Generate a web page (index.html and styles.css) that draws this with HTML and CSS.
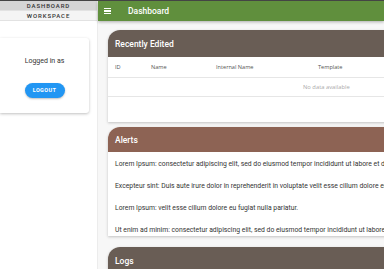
FILE: index.html
```html
<!DOCTYPE html>
<html lang="en">
<head>
    <meta charset="UTF-8">
    <title>Dashboard</title>
    <link rel="stylesheet" href="styles.css">
</head>
<body>
<div class="app">
    <!-- 왼쪽 사이드바 -->
    <aside class="side">
        <div class="tab on">DASHBOARD</div>
        <div class="tab">WORKSPACE</div>
        <div class="user-card">
            <p>Logged in as</p>
            <button class="btn-logout">LOGOUT</button>
        </div>
    </aside>

    <!-- 메인 영역 -->
    <main class="main">
        <header class="topbar">
            <span class="burger"><i></i><i></i><i></i></span>
            <h1>Dashboard</h1>
        </header>

        <div class="content">
            <section class="card">
                <h2 class="card-hd gray">Recently Edited</h2>
                <table class="tbl">
                    <thead>
                        <tr>
                            <th class="c-id">ID</th>
                            <th class="c-name">Name</th>
                            <th class="c-int">Internal Name</th>
                            <th class="c-tpl">Template</th>
                            <th></th>
                        </tr>
                    </thead>
                    <tbody>
                        <tr><td colspan="5" class="empty">No data available</td></tr>
                    </tbody>
                </table>
                <div class="tbl-foot"></div>
            </section>

            <section class="card alert-card">
                <h2 class="card-hd brown">Alerts</h2>
                <div class="alerts">
                    <p>Lorem Ipsum: consectetur adipiscing elit, sed do eiusmod tempor incididunt ut labore et dolore magna aliqua.</p>
                    <p>Excepteur sint: Duis aute irure dolor in reprehenderit in voluptate velit esse cillum dolore eu fugiat.</p>
                    <p>Lorem Ipsum: velit esse cillum dolore eu fugiat nulla pariatur.</p>
                    <p>Ut enim ad minim: consectetur adipiscing elit, sed do eiusmod tempor incididunt ut labore et dolore.</p>
                </div>
            </section>

            <section class="card">
                <h2 class="card-hd gray">Logs</h2>
            </section>
        </div>
    </main>
</div>
</body>
</html>
```

FILE: styles.css
```css
*{
    box-sizing: border-box;
}
body{
    margin: 0;
    font-family: Roboto, "Liberation Sans", sans-serif;
    overflow: hidden;
    background-color: #fff;
}
.app{
    display: flex;
    width: 384px;
    height: 269px;
    border-top: 1px solid #444;
    overflow: hidden;
}

/* 사이드바 */
.side{
    flex: 0 0 98px;
    background-color: #fff;
    border-right: 1px solid #ececec;
}
.tab{
    height: 10px;
    font-size: 6px;
    font-weight: 500;
    letter-spacing: 0.9px;
    color: #333;
    text-align: center;
    line-height: 10px;
    background-color: #f4f4f4;
    border-bottom: 1px solid #e2e2e2;
}
.tab.on{
    background-color: #d5d5d5;
}
.user-card{
    width: 89px;
    margin-top: 17px;
    padding: 19px 0 15px;
    background-color: #fff;
    border-radius: 0 3px 3px 0;
    box-shadow: 0 1px 3px rgba(0,0,0,0.25);
    text-align: center;
}
.user-card p{
    margin: 0 0 12px;
    font-size: 7px;
    color: #333;
}
.btn-logout{
    width: 40px;
    height: 15px;
    padding: 0;
    border: 0;
    border-radius: 8px;
    background-color: #2196f3;
    color: #fff;
    font-family: Roboto, sans-serif;
    font-size: 5.5px;
    font-weight: bold;
    letter-spacing: 0.4px;
    box-shadow: 0 1px 2px rgba(0,0,0,0.25);
}

/* 메인 */
.main{
    flex: 1;
    min-width: 0;
    background-color: #f7f7f7;
}
.topbar{
    display: flex;
    align-items: center;
    height: 20px;
    padding-left: 6px;
    background-color: #608f3d;
    box-shadow: 0 1px 3px rgba(0,0,0,0.3);
    color: #fff;
}
.burger{
    display: flex;
    flex-direction: column;
    gap: 1.4px;
    width: 7px;
}
.burger i{
    display: block;
    height: 1.2px;
    background-color: #fff;
}
.topbar h1{
    margin: 0 0 0 17px;
    font-size: 8.5px;
    font-weight: 500;
}
.content{
    width: 320px;
    padding: 9px 0 0 10px;
}
.card{
    margin-bottom: 5px;
    background-color: #fff;
    border-radius: 12px 0 0 0;
    box-shadow: 0 1px 3px rgba(0,0,0,0.22);
}
.alert-card{
    margin-bottom: 11px;
}
.card-hd{
    margin: 0;
    height: 27px;
    padding: 9px 0 0 7px;
    border-radius: 12px 0 0 0;
    font-size: 8.5px;
    font-weight: 500;
    color: #fff;
}
.card-hd.gray{
    background-color: #695d55;
}
.card-hd.brown{
    background-color: #8d6354;
    height: 25px;
    padding-top: 8px;
}

/* 표 */
.tbl{
    width: 100%;
    border-collapse: collapse;
    font-family: "Open Sans", sans-serif;
    font-size: 5.6px;
    color: #555;
}
.tbl th{
    height: 20px;
    font-weight: normal;
    text-align: left;
    border-bottom: 1px solid #e6e6e6;
    padding: 0;
}
.c-id{ width: 43px; padding-left: 7px !important; }
.c-name{ width: 65px; }
.c-int{ width: 102px; }
.c-tpl{ width: 60px; }
.tbl td{
    height: 19px;
    border-bottom: 1px solid #e6e6e6;
}
.empty{
    padding-left: 195px;
    color: #aaa;
    font-size: 5.8px;
}
.tbl-foot{
    height: 25px;
}

/* 알림 */
.alerts{
    padding: 9px 0 2px 7px;
    white-space: nowrap;
    overflow: hidden;
}
.alerts p{
    margin: 0 0 15px;
    height: 7px;
    font-size: 6.8px;
    color: #333;
    line-height: 7px;
}
.alerts p:last-child{
    margin-bottom: 0;
}
```
